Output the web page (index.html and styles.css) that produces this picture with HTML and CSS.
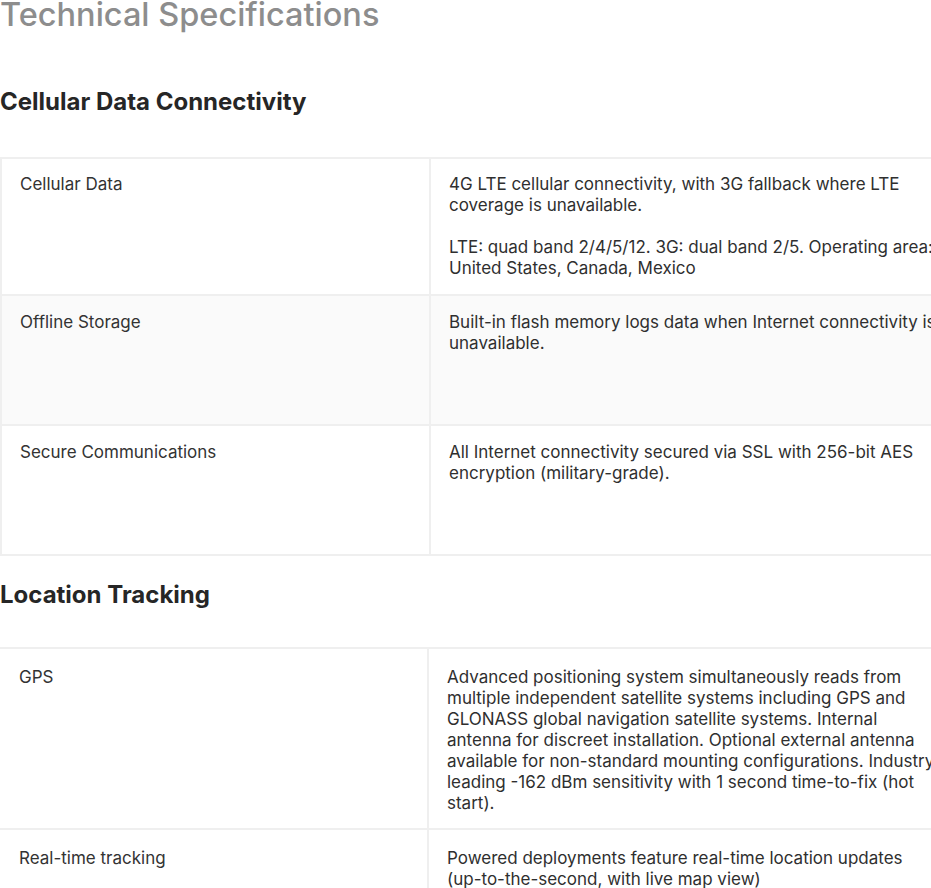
FILE: index.html
```html
<!DOCTYPE html>
<html lang="en">
<head>
<meta charset="utf-8">
<title>Technical Specifications</title>
<link rel="stylesheet" href="styles.css">
</head>
<body>
<main class="specs">
  <h1 class="page-title">Technical Specifications</h1>

  <section class="spec-section">
    <h2 class="section-title">Cellular Data Connectivity</h2>
    <table class="spec-table first">
      <colgroup><col class="col-name"><col class="col-desc"></colgroup>
      <tbody>
        <tr class="row-lead">
          <td class="name">Cellular Data</td>
          <td class="desc">
            <p>4G LTE cellular connectivity, with 3G fallback where LTE coverage is unavailable.</p>
            <p>LTE: quad band 2/4/5/12. 3G: dual band 2/5. Operating area: United States, Canada, Mexico</p>
          </td>
        </tr>
        <tr class="alt">
          <td class="name">Offline Storage</td>
          <td class="desc"><p>Built-in flash memory logs data when Internet connectivity is unavailable.</p></td>
        </tr>
        <tr>
          <td class="name">Secure Communications</td>
          <td class="desc"><p>All Internet connectivity secured via SSL with 256-bit AES encryption (military-grade).</p></td>
        </tr>
      </tbody>
    </table>
  </section>

  <section class="spec-section">
    <h2 class="section-title">Location Tracking</h2>
    <table class="spec-table second">
      <colgroup><col class="col-name"><col class="col-desc"></colgroup>
      <tbody>
        <tr class="row-auto">
          <td class="name">GPS</td>
          <td class="desc"><p>Advanced positioning system simultaneously reads from multiple independent satellite systems including GPS and GLONASS global navigation satellite systems. Internal antenna for discreet installation. Optional external antenna available for non-standard mounting configurations. Industry leading -162 dBm sensitivity with 1 second time-to-fix (hot start).</p></td>
        </tr>
        <tr>
          <td class="name">Real-time tracking</td>
          <td class="desc"><p>Powered deployments feature real-time location updates (up-to-the-second, with live map view)</p></td>
        </tr>
      </tbody>
    </table>
  </section>
</main>
</body>
</html>
```

FILE: styles.css
```css
html, body {
  margin: 0;
  padding: 0;
  background: #ffffff;
  overflow: hidden;
}

body {
  font-family: Inter, "Open Sans", Roboto, sans-serif;
  color: #2f2f2f;
  width: 931px;
  height: 888px;
}

.specs {
  display: flex;
  flex-direction: column;
  width: 960px;
}

.page-title {
  margin: -5px 0 0 0;
  font-size: 32.5px;
  line-height: 40px;
  font-weight: 500;
  color: #8d8d8d;
}

.spec-section {
  display: flex;
  flex-direction: column;
}

.section-title {
  margin: 0;
  font-size: 24px;
  line-height: 30px;
  font-weight: 700;
  color: #262626;
}

.spec-section:first-of-type .section-title {
  margin-top: 52px;
  margin-bottom: 40px;
}

.spec-section + .spec-section .section-title {
  margin-top: 24px;
  margin-bottom: 37px;
}

.spec-table {
  border-collapse: collapse;
  width: 958px;
  table-layout: fixed;
}

.spec-table .col-name {
  width: 429px;
}

.spec-table.second .col-name {
  width: 428px;
}

.spec-table td {
  vertical-align: top;
  border: 2px solid #efefef;
  font-size: 17px;
  line-height: 21px;
  padding: 16px 20px 16px 18px;
  height: 130px;
  box-sizing: border-box;
}

.spec-table tr.row-lead td {
  padding-top: 15px;
  padding-bottom: 15px;
}

.spec-table.second td {
  padding-left: 19px;
  padding-top: 18px;
  padding-bottom: 14px;
}

.spec-table.second td.desc {
  padding-left: 18px;
}

.spec-table td.name {
  color: #333333;
}

.spec-table tr.alt td {
  background: #fafafa;
}

.spec-table tr.row-auto td {
  height: auto;
}

.spec-table p {
  margin: 0;
}

.spec-table p + p {
  margin-top: 21px;
}

.spec-table.second td:first-child {
  border-left: none;
}
```
